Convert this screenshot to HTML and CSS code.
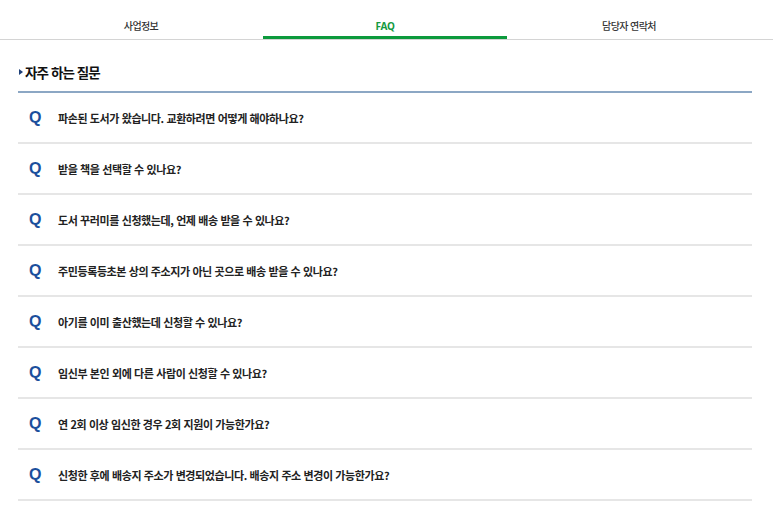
FILE: index.html
```html
<!DOCTYPE html>
<html lang="ko">
<head>
<meta charset="utf-8">
<title>FAQ</title>
<link rel="stylesheet" href="styles.css">
</head>
<body>
<nav class="tabs">
  <a class="tab">사업정보</a>
  <a class="tab active">FAQ</a>
  <a class="tab">담당자 연락처</a>
</nav>
<section class="faq">
  <h2 class="faq-title"><span class="tri"></span>자주 하는 질문</h2>
  <ul class="faq-list">
    <li class="faq-item"><span class="q">Q</span><span class="text">파손된 도서가 왔습니다. 교환하려면 어떻게 해야하나요?</span></li>
    <li class="faq-item"><span class="q">Q</span><span class="text">받을 책을 선택할 수 있나요?</span></li>
    <li class="faq-item"><span class="q">Q</span><span class="text">도서 꾸러미를 신청했는데, 언제 배송 받을 수 있나요?</span></li>
    <li class="faq-item"><span class="q">Q</span><span class="text">주민등록등초본 상의 주소지가 아닌 곳으로 배송 받을 수 있나요?</span></li>
    <li class="faq-item"><span class="q">Q</span><span class="text">아기를 이미 출산했는데 신청할 수 있나요?</span></li>
    <li class="faq-item"><span class="q">Q</span><span class="text">임신부 본인 외에 다른 사람이 신청할 수 있나요?</span></li>
    <li class="faq-item"><span class="q">Q</span><span class="text">연 2회 이상 임신한 경우 2회 지원이 가능한가요?</span></li>
    <li class="faq-item"><span class="q">Q</span><span class="text">신청한 후에 배송지 주소가 변경되었습니다. 배송지 주소 변경이 가능한가요?</span></li>
  </ul>
</section>
</body>
</html>
```
FILE: styles.css
```css
html, body {
  margin: 0;
  padding: 0;
  background: #fff;
}
body {
  font-family: "Noto Sans CJK KR", "Noto Sans", sans-serif;
  color: #222;
}
.tabs {
  display: flex;
  padding: 0 22px 0 19px;
  border-bottom: 1px solid #d4d4d4;
}
.tab {
  flex: 1;
  text-align: center;
  padding-top: 18px;
  padding-bottom: 2px;
  height: 16px;
  line-height: 16px;
  font-size: 10px;
  font-weight: 500;
  letter-spacing: -0.6px;
  color: #333;
  border-bottom: 3px solid transparent;
}
.tab.active {
  color: #159a3f;
  font-weight: 700;
  letter-spacing: -0.3px;
  font-family: "Noto Sans", "Noto Sans CJK KR", sans-serif;
  border-bottom-color: #0c9a3c;
}
.faq {
  padding: 0 21px 0 18px;
}
.faq-title {
  margin: 0;
  padding: 22px 0 9px 1px;
  height: 20px;
  line-height: 20px;
  font-size: 13.5px;
  font-weight: 700;
  letter-spacing: -0.9px;
  color: #111;
  border-bottom: 2px solid #8ca7c4;
  display: flex;
  align-items: center;
}
.tri {
  width: 0;
  height: 0;
  border-top: 3px solid transparent;
  border-bottom: 3px solid transparent;
  border-left: 4px solid #1d3f78;
  margin-right: 2px;
}
.faq-list {
  list-style: none;
  margin: 0;
  padding: 0;
}
.faq-item {
  display: flex;
  align-items: center;
  height: 49px;
  border-bottom: 2px solid #e6e6e6;
}
.q {
  width: 29px;
  padding-left: 11px;
  font-family: "Liberation Sans", Arial, sans-serif;
  font-weight: 700;
  font-size: 16px;
  color: #1b4f9c;
}
.text {
  font-size: 11px;
  font-weight: 700;
  letter-spacing: -0.4px;
  color: #222;
}
```
